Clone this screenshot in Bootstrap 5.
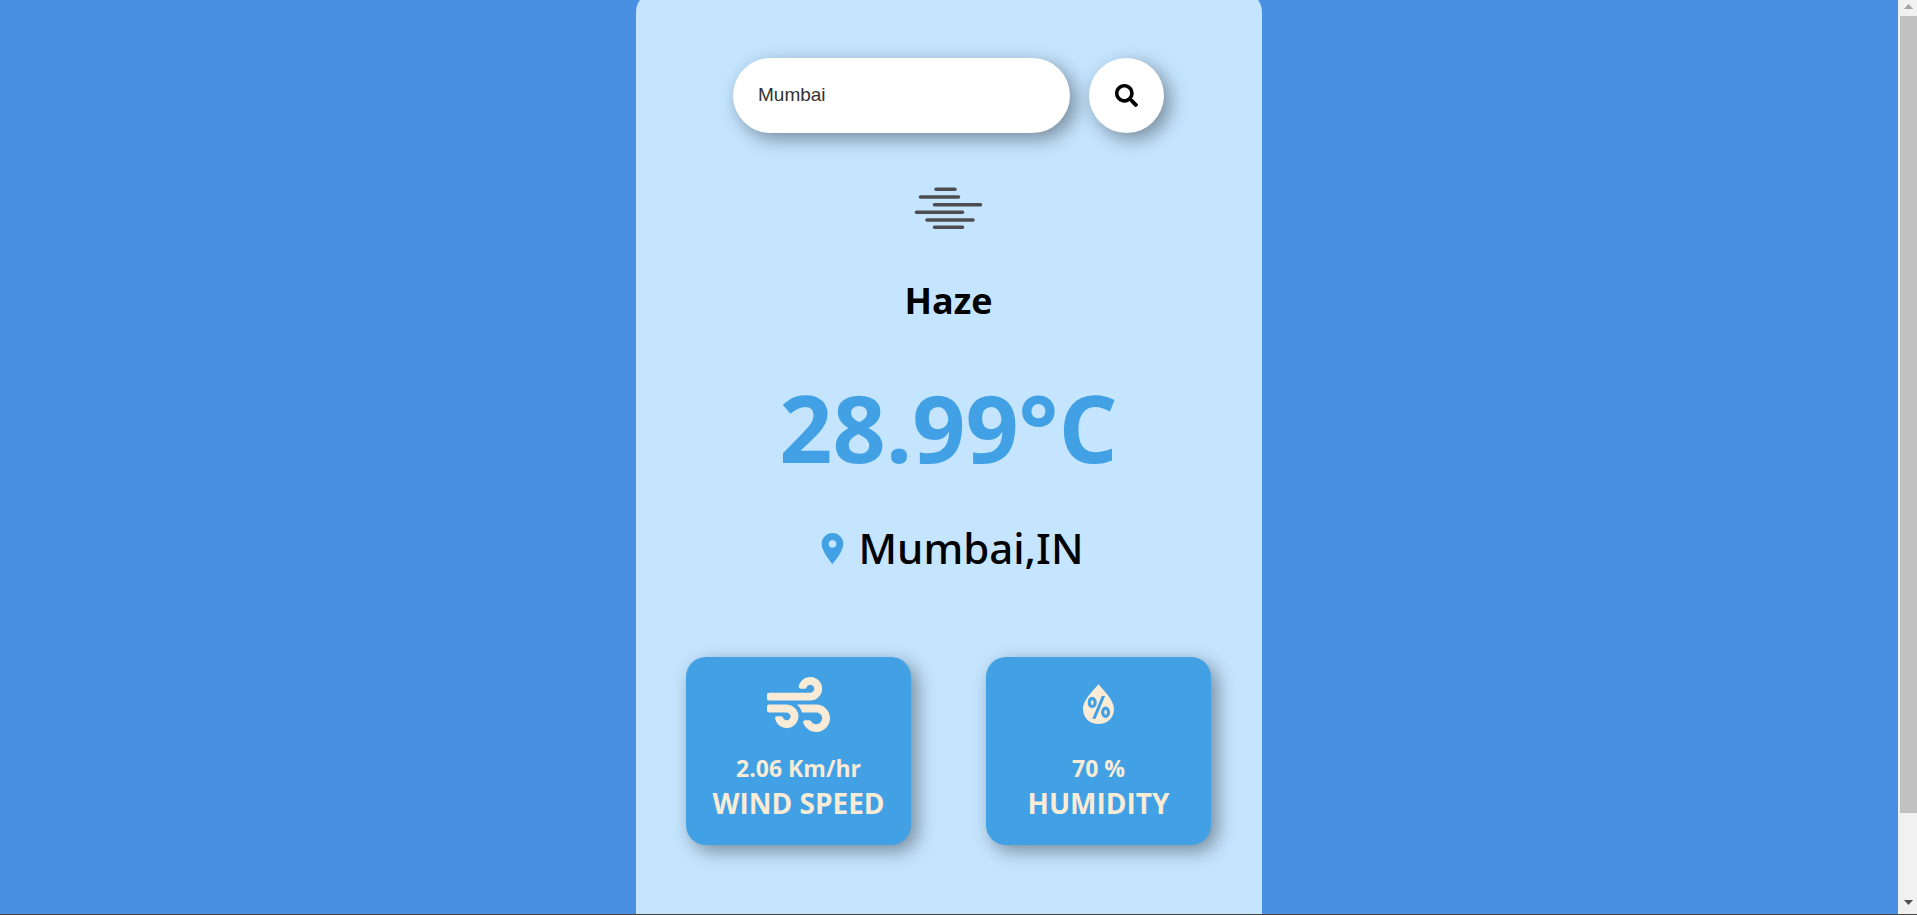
<!DOCTYPE html>
<html lang="en">
<head>
<meta charset="utf-8">
<meta name="viewport" content="width=device-width, initial-scale=1">
<title>Weather</title>
<link rel="stylesheet" href="https://cdn.jsdelivr.net/npm/bootstrap@5.3.0/dist/css/bootstrap.min.css">
<style>
  :root { --sky: #4990e2; --panel: #c5e5ff; --accent: #41a1e4; --cream: #faebd7; }
  body { background: var(--sky); color: #000; font-family: "Open Sans", "Noto Sans", sans-serif; }
  .screen { height: 100vh; border-bottom: 1px solid #444; }
  .weather { width: 100%; max-width: 626px; min-height: 110vh; margin-top: -8px; padding: 66px 51px 50px 50px; background: var(--panel); border-radius: 20px; }
  .raised { box-shadow: 6px 6px 19px rgba(0, 0, 0, .4); }
  .city-input { width: 337px; height: 75px; padding: 0 25px 2px; border: 0; border-radius: 38px; background: #fff; color: #333; font: 19px "Liberation Sans", sans-serif; }
  .search-btn { width: 75px; height: 75px; border: 0; background: #fff; color: #000; }
  .search-row { gap: 19px; }
  .haze { margin-top: 53px; }
  .condition { margin: 43px 0 0; font-size: 36px; line-height: 56px; font-weight: 700; }
  .temp { margin: 32px 0 0; font-size: 93px; line-height: 132px; font-weight: 700; color: var(--accent); }
  .place { margin: 25px 0 0; gap: 8px; font-family: "Noto Sans", "Open Sans", sans-serif; font-size: 42px; line-height: 60px; font-weight: 500; }
  .place svg { color: var(--accent); }
  .stats { margin-top: 79px; }
  .stat { width: 225px; height: 188px; padding-top: 16px; border-radius: 20px; background: var(--accent); color: var(--cream); }
  .stat-icon { height: 62px; }
  .stat-value { margin-top: 16px; font-size: 23px; line-height: 34px; font-weight: 700; }
  .stat-name { font-size: 28px; line-height: 36px; font-weight: 700; }
  .scroller { width: 19px; background: #f1f1f1; padding-left: 2px; }
  .scroller svg { flex: none; }
  .thumb { height: 87.2%; background: #c1c1c1; }
</style>
</head>
<body>
<div class="screen d-flex overflow-hidden">
  <main class="flex-grow-1 d-flex justify-content-center align-items-start">
    <section class="weather d-flex flex-column align-items-center">
      <form class="search-row d-flex justify-content-center" onsubmit="return false">
        <input class="city-input raised" type="text" value="Mumbai" aria-label="City">
        <button class="search-btn raised rounded-circle d-flex align-items-center justify-content-center p-0" type="submit" aria-label="Search">
          <svg width="23" height="23" viewBox="0 0 512 512" fill="currentColor" aria-hidden="true"><path d="M505 442.7L405.3 343c-4.5-4.5-10.6-7-17-7H372c27.6-35.3 44-79.7 44-128C416 93.1 322.9 0 208 0S0 93.1 0 208s93.1 208 208 208c48.3 0 92.7-16.4 128-44v16.3c0 6.4 2.5 12.5 7 17l99.7 99.7c9.4 9.4 24.6 9.4 33.9 0l28.3-28.3c9.4-9.4 9.4-24.6.1-34zM208 336c-70.7 0-128-57.2-128-128 0-70.7 57.2-128 128-128 70.7 0 128 57.2 128 128 0 70.7-57.2 128-128 128z"/></svg>
        </button>
      </form>
      <svg class="haze" width="70" height="44" viewBox="0 0 70 44" stroke="#4d4d4f" stroke-width="3.6" stroke-linecap="round" aria-hidden="true"><path d="M22 3.2H41M6.500 11H44.500M20.500 18.700H66.500M2.500 26.300H48.500M13 34H59M20.500 41.300H48.500"/></svg>
      <h2 class="condition">Haze</h2>
      <h1 class="temp">28.99°C</h1>
      <p class="place d-flex align-items-center">
        <svg width="37" height="37" viewBox="0 0 24 24" fill="currentColor" aria-hidden="true"><path d="M12 2C8.130 2 5 5.130 5 9c0 5.250 7 13 7 13s7-7.750 7-13c0-3.870-3.130-7-7-7zm0 9.500c-1.380 0-2.500-1.120-2.500-2.500s1.120-2.500 2.500-2.500 2.500 1.120 2.500 2.500-1.120 2.500-2.500 2.500z"/></svg>
        <span>Mumbai,IN</span>
      </p>
      <div class="stats d-flex justify-content-between w-100">
        <div class="stat raised text-center">
          <div class="stat-icon d-flex align-items-center justify-content-center">
            <svg width="63" height="63" viewBox="0 0 512 512" fill="currentColor" aria-hidden="true"><path d="M156.700 256H16c-8.800 0-16 7.200-16 16v32c0 8.800 7.200 16 16 16h142.200c15.900 0 30.800 10.900 33.400 26.600 3.300 20-12.100 37.400-31.600 37.400-14.100 0-26.100-9.200-30.400-21.900-2.100-6.300-8.600-10.100-15.200-10.100H81.600c-9.800 0-17.700 8.800-15.900 18.400 8.600 44.100 47.600 77.600 94.200 77.600 57.100 0 102.700-50.100 95.200-108.600C249 291 205.400 256 156.700 256zM16 224h336c59.700 0 106.800-54.800 93.800-116.700-7.600-36.200-36.900-65.500-73.100-73.100-55.400-11.600-105.100 24.900-114.900 75.500-1.900 9.600 6.100 18.300 15.800 18.300h32.800c6.700 0 13.100-3.800 15.200-10.100C325.900 105.200 337.900 96 352 96c19.400 0 34.900 17.400 31.600 37.400-2.600 15.700-17.400 26.600-33.400 26.600H16c-8.800 0-16 7.200-16 16v32c0 8.800 7.200 16 16 16zm384 32H243.700c19.300 16.600 33.200 38.800 39.800 64H400c26.500 0 48 21.500 48 48s-21.500 48-48 48c-17.900 0-33.300-9.900-41.600-24.400-2.900-5-8.700-7.600-14.500-7.600h-33.800c-10.900 0-19 10.800-15.300 21.100 17.800 50.600 70.500 84.800 129.400 72.300 41.200-8.700 75.100-41.600 84.700-82.700C526 321.500 470.500 256 400 256z"/></svg>
          </div>
          <div class="stat-value">2.06 Km/hr</div>
          <div class="stat-name">WIND SPEED</div>
        </div>
        <div class="stat raised text-center">
          <div class="stat-icon d-flex align-items-center justify-content-center">
            <svg width="31" height="40" viewBox="0 0 31 40" aria-hidden="true">
              <path fill="currentColor" d="M15.500 0C17.500 3.500 31 15 31 25C31 34 24 40 15.500 40S0 34 0 25C0 15 13.500 3.500 15.500 0z"/>
              <g fill="none" stroke="#41a1e4" stroke-width="3.2"><ellipse cx="9.200" cy="18.400" rx="2.900" ry="4.100"/><ellipse cx="22.600" cy="28.300" rx="2.900" ry="4.100"/></g>
              <path fill="#41a1e4" d="M9.300 34.700 18.800 12h3.300l-9.500 22.700z"/>
            </svg>
          </div>
          <div class="stat-value">70 %</div>
          <div class="stat-name">HUMIDITY</div>
        </div>
      </div>
    </section>
  </main>
  <div class="scroller d-flex flex-column flex-shrink-0" aria-hidden="true">
    <svg width="17" height="16" viewBox="0 0 17 16"><path fill="#a3a3a3" d="M4 9 8.500 4 13 9z"/></svg>
    <div class="thumb"></div>
    <svg class="mt-auto" width="17" height="17" viewBox="0 0 17 17"><path fill="#505050" d="M4 3 8.500 8 13 3z"/></svg>
  </div>
</div>
<script src="https://cdn.jsdelivr.net/npm/bootstrap@5.3.0/dist/js/bootstrap.bundle.min.js"></script>
</body>
</html>
